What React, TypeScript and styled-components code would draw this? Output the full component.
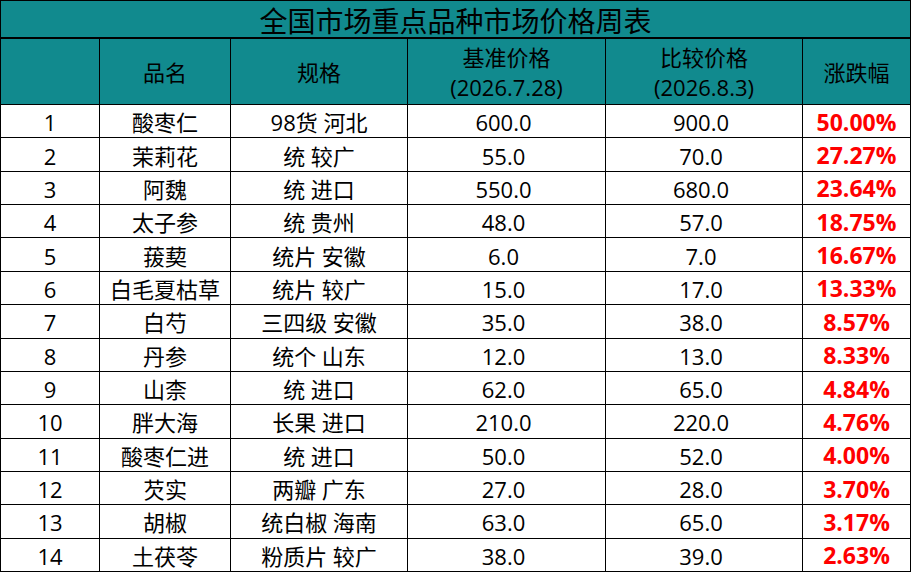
import React from "react";
import styled, { createGlobalStyle } from "styled-components";

const Global = createGlobalStyle`
  html, body { margin: 0; padding: 0; background: #ffffff; }
  body { font-family: "Open Sans", "Noto Sans CJK SC", sans-serif; }
`;

const Sheet = styled.div`
  width: 911px;
  height: 572px;
  box-sizing: border-box;
  display: grid;
  grid-template-columns: 99px 131px 177px 198px 197px 108px;
  grid-template-rows: 38px 66px repeat(14, 1fr);
  border-top: 1px solid #000;
  border-left: 1px solid #000;
  font-family: "Open Sans", "Noto Sans CJK SC", sans-serif;
  color: #000;
`;

const Title = styled.div`
  grid-column: 1 / -1;
  background: #118a8e;
  border-right: 1px solid #000;
  border-bottom: 2px solid #000;
  box-sizing: border-box;
  display: flex;
  align-items: center;
  justify-content: center;
  font-family: "Noto Sans CJK SC", sans-serif;
  font-size: 28px;
  line-height: 1;
  padding-top: 1px;
`;

const Head = styled.div`
  background: #118a8e;
  border-right: 1px solid #000;
  border-bottom: 1px solid #000;
  box-sizing: border-box;
  display: flex;
  flex-direction: column;
  align-items: center;
  justify-content: center;
  font-size: 22px;
  line-height: 31px;
  padding-top: 0;
  font-family: "Noto Sans CJK SC", sans-serif;
`;

const HeadSub = styled.span`
  font-family: "Open Sans", "Noto Sans CJK SC", sans-serif;
`;

const Cell = styled.div<{ $num?: boolean; $pct?: boolean }>`
  border-right: 1px solid #000;
  border-bottom: 1px solid #000;
  box-sizing: border-box;
  display: flex;
  align-items: center;
  justify-content: center;
  font-size: ${(p) => (p.$pct ? "23px" : "22px")};
  line-height: 1;
  padding-top: 2px;
  padding-right: ${(p) => (p.$num ? "6px" : "0")};
  white-space: pre;
  color: ${(p) => (p.$pct ? "#ff0000" : "#000")};
  font-weight: ${(p) => (p.$pct ? 700 : 400)};
`;

const rows: [string, string, string, string, string, string][] = [
  ["1", "酸枣仁", "98货 河北", "600.0", "900.0", "50.00%"],
  ["2", "茉莉花", "统 较广", "55.0", "70.0", "27.27%"],
  ["3", "阿魏", "统 进口", "550.0", "680.0", "23.64%"],
  ["4", "太子参", "统 贵州", "48.0", "57.0", "18.75%"],
  ["5", "菝葜", "统片 安徽", "6.0", "7.0", "16.67%"],
  ["6", "白毛夏枯草", "统片 较广", "15.0", "17.0", "13.33%"],
  ["7", "白芍", "三四级 安徽", "35.0", "38.0", "8.57%"],
  ["8", "丹参", "统个 山东", "12.0", "13.0", "8.33%"],
  ["9", "山柰", "统 进口", "62.0", "65.0", "4.84%"],
  ["10", "胖大海", "长果 进口", "210.0", "220.0", "4.76%"],
  ["11", "酸枣仁进", "统 进口", "50.0", "52.0", "4.00%"],
  ["12", "芡实", "两瓣 广东", "27.0", "28.0", "3.70%"],
  ["13", "胡椒", "统白椒 海南", "63.0", "65.0", "3.17%"],
  ["14", "土茯苓", "粉质片 较广", "38.0", "39.0", "2.63%"],
];

export default function App() {
  return (
    <>
      <Global />
      <Sheet>
        <Title>全国市场重点品种市场价格周表</Title>
        <Head />
        <Head>品名</Head>
        <Head>规格</Head>
        <Head>
          <span>基准价格</span>
          <HeadSub>(2026.7.28)</HeadSub>
        </Head>
        <Head>
          <span>比较价格</span>
          <HeadSub>(2026.8.3)</HeadSub>
        </Head>
        <Head>涨跌幅</Head>
        {rows.map((r) => (
          <React.Fragment key={r[0]}>
            <Cell>{r[0]}</Cell>
            <Cell>{r[1]}</Cell>
            <Cell>{r[2]}</Cell>
            <Cell $num>{r[3]}</Cell>
            <Cell $num>{r[4]}</Cell>
            <Cell $pct>{r[5]}</Cell>
          </React.Fragment>
        ))}
      </Sheet>
    </>
  );
}
